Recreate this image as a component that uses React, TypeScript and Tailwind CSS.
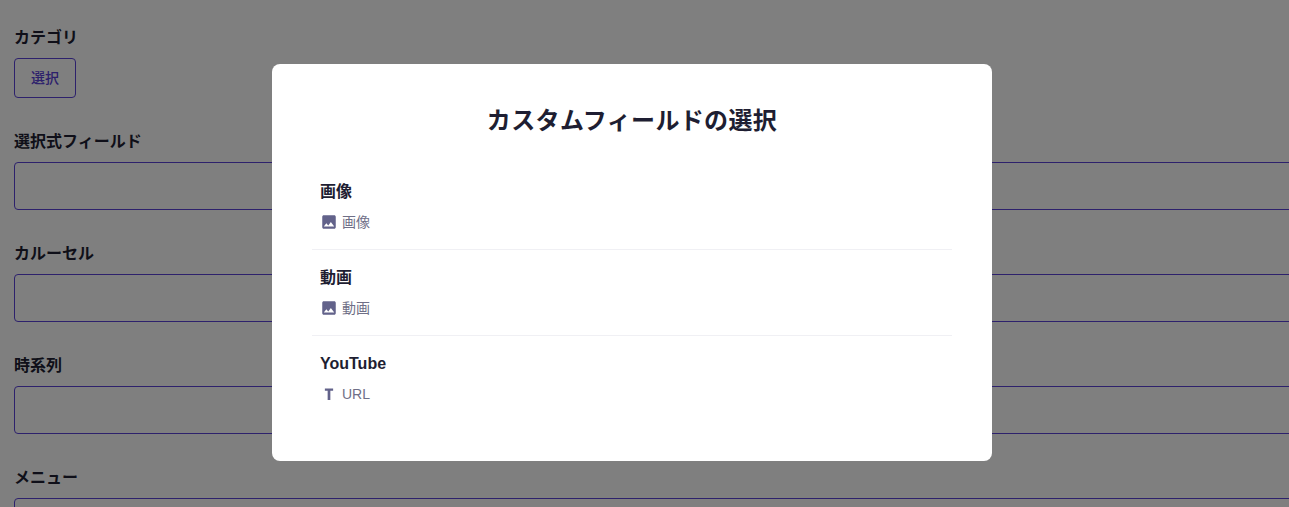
import { MdImage } from "react-icons/md";

const font = { fontFamily: '"Liberation Sans", "Noto Sans CJK JP", sans-serif' };

const fields = ["選択式フィールド", "カルーセル", "時系列", "メニュー"];

function TextIcon() {
    return (
        <svg width={18} height={18} viewBox="0 0 24 24" fill="#62628a">
            <path d="M6.5 4.5v3h3.7v12.5h3.6V7.5h3.7v-3z" />
        </svg>
    );
}

const options = [
    { title: "画像", label: "画像", icon: <MdImage className="text-[#62628a]" size={18} /> },
    { title: "動画", label: "動画", icon: <MdImage className="text-[#62628a]" size={18} /> },
    { title: "YouTube", label: "URL", icon: <TextIcon /> },
];

export default function App() {
    return (
        <div className="h-[507px] overflow-hidden bg-white text-[#1e1e32]" style={font}>
            <div className="w-[1400px] pl-[14px] pt-[26px]">
                <div className="h-[24px] text-base leading-6 font-bold">カテゴリ</div>
                <button className="mt-[8px] h-[40px] w-[62px] rounded border border-[#5a42d8] text-sm font-medium text-[#5a42d8]">
                    選択
                </button>
                {fields.map((name) => (
                    <div key={name} className="mt-[32px]">
                        <div className="h-[24px] text-base leading-6 font-bold">{name}</div>
                        <div className="mt-[8px] h-[48px] rounded border border-[#5a42d8]" />
                    </div>
                ))}
            </div>

            <div className="fixed inset-0 flex items-start justify-center bg-black/50 pt-[64px] pr-[25px]">
                <div className="h-[397px] w-[720px] rounded-lg bg-white px-[40px] pt-[41px]">
                    <h2 className="text-center text-2xl leading-8 font-bold tracking-[0.35px]">カスタムフィールドの選択</h2>
                    <div className="mt-[27px]">
                        {options.map(({ title, label, icon }) => (
                            <div key={title} className="border-b border-[#f0f0f4] px-2 pt-[16px] pb-[15px] last:border-b-0">
                                <div className="text-base leading-6 font-bold">{title}</div>
                                <div className="mt-[6px] flex h-[24px] items-center gap-1 text-sm text-[#6f6f87]">
                                    {icon}
                                    <span>{label}</span>
                                </div>
                            </div>
                        ))}
                    </div>
                </div>
            </div>
        </div>
    );
}
